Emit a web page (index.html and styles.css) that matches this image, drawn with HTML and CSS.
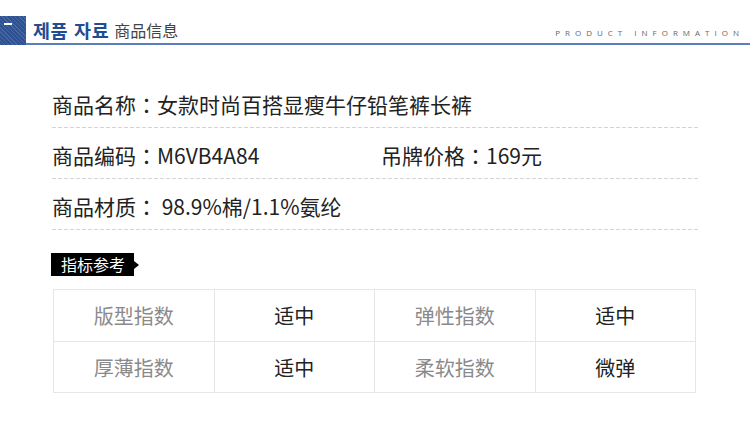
FILE: index.html
```html
<!DOCTYPE html>
<html lang="zh-CN">
<head>
<meta charset="utf-8">
<link rel="stylesheet" href="styles.css">
</head>
<body>
<div class="page">
  <div class="header">
    <div class="hbox"><span class="hmark"></span></div>
    <div class="hmain">
      <span class="kr" lang="ko">제품 자료</span>
      <span class="cn">商品信息</span>
      <span class="en" lang="en">PRODUCT INFORMATION</span>
    </div>
  </div>

  <div class="info">
    <div class="row"><span>商品名称<span class="colon" lang="zh-TW">：</span>女款时尚百搭显瘦牛仔铅笔裤长裤</span></div>
    <div class="row">
      <span class="col1">商品编码<span class="colon" lang="zh-TW">：</span>M6VB4A84</span>
      <span>吊牌价格<span class="colon" lang="zh-TW">：</span>169元</span>
    </div>
    <div class="row"><span>商品材质<span class="colon" lang="zh-TW">：</span>&nbsp;98.9%棉/1.1%氨纶</span></div>
  </div>

  <div class="tag">指标参考</div>

  <table class="spec">
    <tr class="r1">
      <td class="k">版型指数</td><td class="v">适中</td>
      <td class="k">弹性指数</td><td class="v">适中</td>
    </tr>
    <tr class="r2">
      <td class="k">厚薄指数</td><td class="v">适中</td>
      <td class="k">柔软指数</td><td class="v">微弹</td>
    </tr>
  </table>
</div>
</body>
</html>
```

FILE: styles.css
```css
html, body {
  margin: 0;
  padding: 0;
  background: #fff;
}
body {
  font-family: "Noto Sans CJK SC", "Noto Sans", sans-serif;
  color: #222;
}
.page {
  width: 750px;
  height: 426px;
  overflow: hidden;
  padding-top: 16px;
  box-sizing: border-box;
}
.header {
  display: flex;
  height: 29px;
}
.hbox {
  width: 26px;
  height: 29px;
  background-color: #2d5192;
  background-image: repeating-linear-gradient(45deg, rgba(255,255,255,0.12) 0 1px, transparent 1px 3px);
  position: relative;
}
.hmark {
  position: absolute;
  left: 4px;
  top: 7px;
  width: 8px;
  height: 2px;
  background: #fff;
}
.hmain {
  flex: 1;
  display: flex;
  align-items: center;
  border-bottom: 2px solid #5b7dbb;
  padding-left: 7px;
}
.kr {
  font-family: "Noto Sans CJK KR", sans-serif;
  font-weight: bold;
  font-size: 18.5px;
  color: #1f4d93;
  letter-spacing: 0.6px;
}
.cn {
  font-size: 16px;
  color: #444;
  margin-left: 5px;
}
.en {
  margin-left: auto;
  margin-right: 6px;
  font-family: "Open Sans", "DejaVu Sans", sans-serif;
  font-size: 8px;
  letter-spacing: 5px;
  color: #666;
  padding-top: 6px;
}
.info {
  margin: 32px 50px 0 52px;
}
.row {
  display: flex;
  align-items: center;
  height: 51px;
  box-sizing: border-box;
  padding-top: 4px;
  font-size: 21px;
  color: #222;
  line-height: 1;
  background-image: linear-gradient(to right, #d4d4d4 0 4px, transparent 4px 6px);
  background-size: 6px 1px;
  background-repeat: repeat-x;
  background-position: left bottom;
}
.colon {
  font-family: "Noto Sans CJK TC", "Noto Sans CJK SC", sans-serif;
}
.col1 {
  width: 329px;
}
.tag {
  display: inline-block;
  position: relative;
  margin: 23px 0 0 51px;
  background: #000;
  color: #fff;
  font-size: 16px;
  height: 23px;
  line-height: 23px;
  padding: 0 9px 0 10px;
}
.tag::after {
  content: "";
  position: absolute;
  right: -5px;
  top: 8px;
  border-left: 5px solid #000;
  border-top: 4px solid transparent;
  border-bottom: 4px solid transparent;
}
.spec {
  margin: 13px 0 0 53px;
  width: 643px;
  border-collapse: collapse;
  table-layout: fixed;
}
.spec td {
  border: 1px solid #e6e6e6;
  text-align: center;
  font-size: 20px;
  padding: 0;
}
.r1 td { height: 51px; }
.r2 td { height: 50px; }
.spec .k { color: #8a8a8a; }
.spec .v { color: #222; }
```
